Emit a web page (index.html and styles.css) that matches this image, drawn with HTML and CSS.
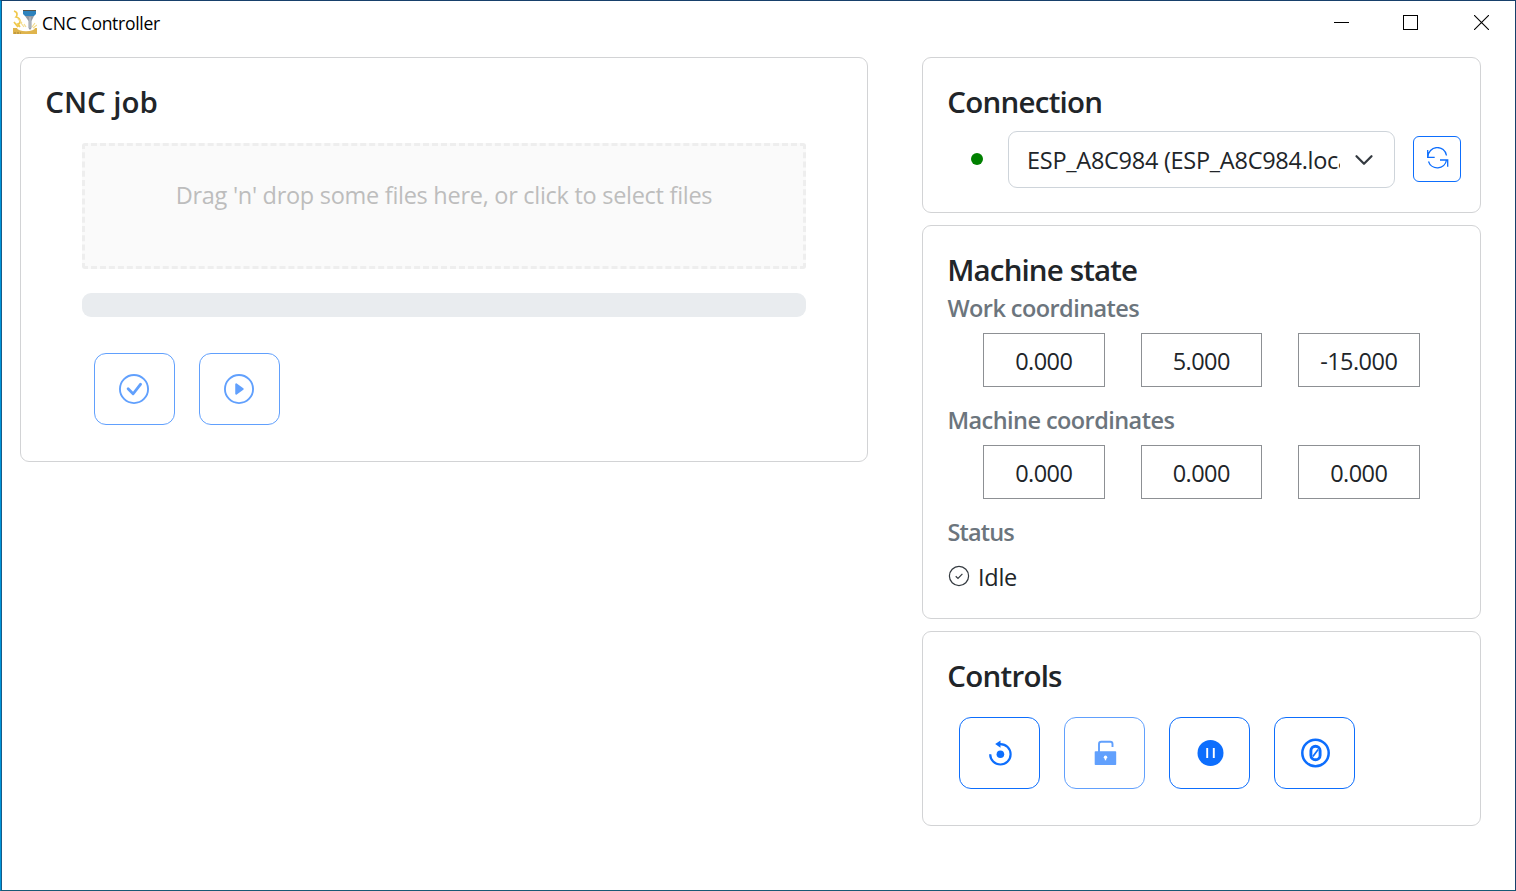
FILE: index.html
```html
<!DOCTYPE html>
<html lang="en">
<head>
<meta charset="utf-8">
<title>CNC Controller</title>
<link rel="stylesheet" href="styles.css">
</head>
<body>
<div class="window">
  <header class="titlebar">
    <svg class="app-icon" width="24" height="25" viewBox="0 0 24 25">
      <rect y="18" width="24" height="6" fill="#dfb44c"/>
      <ellipse cx="13" cy="18" rx="9" ry="3.3" fill="#fff"/>
      <path d="M1 1q3 1 3 3t-1 3q4 1 4 4t-2 3l2 3M1 12l4 5" fill="none" stroke="#f0c84c" stroke-width="1.700"/>
      <path d="M5 9l4 4M11 14l2 3M22 13l-3 4M8 13l3 4M24 15l-4 3" fill="none" stroke="#f3dc8e" stroke-width="1.200"/>
      <path d="M10 0h13v4l-2 2h-9l-2-2z" fill="#2d82bd"/>
      <path d="M10 0h13v1H10z" fill="#57534a"/>
      <path d="M12 6h9l-2.500 5v7l-1.500 2-1.500-2v-7z" fill="#939aa4"/>
      <path d="M17 7v11" stroke="#c3c8ce" stroke-width="1"/>
      <path d="M1 23h7" stroke="#a58237" stroke-width="1" stroke-dasharray="2 1"/>
    </svg>
    <span class="app-title">CNC Controller</span>
    <div class="window-buttons">
      <svg width="15" height="15" viewBox="0 0 15 15"><path d="M0 7.500h15" stroke="#000"/></svg>
      <svg width="15" height="15" viewBox="0 0 15 15"><rect x=".5" y=".5" width="14" height="14" fill="none" stroke="#000"/></svg>
      <svg width="15" height="15" viewBox="0 0 15 15"><path d="M0 0l15 15M15 0L0 15" stroke="#000" stroke-width="1.100"/></svg>
    </div>
  </header>
  <main class="content">
    <section class="card job">
      <h2 class="job-title">CNC job</h2>
      <div class="dropzone"><span>Drag 'n' drop some files here, or click to select files</span></div>
      <div class="progress"></div>
      <div class="actions">
        <button class="btn" disabled>
          <svg width="30" height="30" viewBox="0 0 16 16" fill="currentColor"><path d="M8 15A7 7 0 1 1 8 1a7 7 0 0 1 0 14m0 1A8 8 0 1 0 8 0a8 8 0 0 0 0 16"/><path d="M10.970 4.970a.235.235 0 0 0-.020.022L7.477 9.417 5.384 7.323a.75.75 0 0 0-1.060 1.060L6.970 11.030a.75.75 0 0 0 1.079-.020l3.992-4.990a.75.75 0 0 0-1.071-1.050"/></svg>
        </button>
        <button class="btn" disabled>
          <svg width="30" height="30" viewBox="0 0 16 16" fill="currentColor"><path d="M8 15A7 7 0 1 1 8 1a7 7 0 0 1 0 14m0 1A8 8 0 1 0 8 0a8 8 0 0 0 0 16"/><path d="M6.271 5.055a.5.5 0 0 1 .520.038l3.500 2.500a.5.5 0 0 1 0 .814l-3.500 2.500A.5.5 0 0 1 6 10.500v-5a.5.5 0 0 1 .271-.445"/></svg>
        </button>
      </div>
    </section>
    <div class="side">
      <section class="card connection">
        <h2 class="connection-title">Connection</h2>
        <div class="connection-row">
          <span class="status-dot"></span>
          <div class="select">
            <span class="select-text">ESP_A8C984 (ESP_A8C984.local)</span>
            <svg width="24" height="24" viewBox="0 0 16 16"><path d="m3 5.500 5 5 5-5" fill="none" stroke="#343a40" stroke-width="1.500" stroke-linecap="round" stroke-linejoin="round"/></svg>
          </div>
          <button class="btn refresh">
            <svg width="24" height="24" viewBox="0 0 24 24" fill="none" stroke="currentColor" stroke-width="1.300"><path d="M2.700 3v7.300h7M3 9.800a9.300 9.300 0 0 1 18.500-1.300M22.700 19.700V13h-7.700M21.500 13.200A9.300 9.300 0 0 1 3.500 14.500"/></svg>
          </button>
        </div>
      </section>
      <section class="card machine">
        <h2 class="machine-title">Machine state</h2>
        <h3 class="work-label">Work coordinates</h3>
        <div class="coords"><span>0.000</span><span>5.000</span><span>-15.000</span></div>
        <h3 class="machine-label">Machine coordinates</h3>
        <div class="coords"><span>0.000</span><span>0.000</span><span>0.000</span></div>
        <h3 class="status-label">Status</h3>
        <div class="status-line">
          <svg width="22" height="22" viewBox="0 0 22 22" fill="none" stroke="#343a40" stroke-width="1.200"><circle cx="11" cy="11" r="9.600"/><path d="M7.700 11.200l2.300 2.200 4.400-4.600"/></svg>
          <span>Idle</span>
        </div>
      </section>
      <section class="card controls">
        <h2 class="controls-title">Controls</h2>
        <div class="actions">
          <button class="btn">
            <svg width="30" height="30" viewBox="0 0 30 30"><path d="M5.200 16.300A10.200 10.200 0 1 0 15.400 6.100H14" fill="none" stroke="currentColor" stroke-width="2.200"/><path d="M10.200 6.100L15.500 2.400v7.400z" fill="currentColor"/><circle cx="15.400" cy="16.300" r="3.800" fill="currentColor"/></svg>
          </button>
          <button class="btn" disabled>
            <svg width="30" height="30" viewBox="0 0 30 30"><path d="M9 14V6a2.300 2.300 0 0 1 2.300-2.300h8.900A2.300 2.300 0 0 1 22.500 6v3" fill="none" stroke="currentColor" stroke-width="1.900"/><rect x="4.700" y="13.200" width="21.500" height="13.800" rx=".8" fill="currentColor"/><circle cx="15.500" cy="19.200" r="1.700" fill="#fff"/><path d="M15.500 19v3.300" stroke="#fff" stroke-width="1.400"/></svg>
          </button>
          <button class="btn">
            <svg width="30" height="30" viewBox="0 0 30 30"><circle cx="15.500" cy="15" r="13" fill="currentColor"/><path d="M12.200 10v10M18.800 10v10" stroke="#fff" stroke-width="1.900"/></svg>
          </button>
          <button class="btn">
            <svg width="30" height="30" viewBox="0 0 30 30" fill="none" stroke="currentColor"><circle cx="15.500" cy="15" r="13.200" stroke-width="2.500"/><rect x="10.900" y="8.200" width="9.200" height="13.600" rx="4.600" stroke-width="2.900"/><path d="M12.900 18.500l5.200-7" stroke-width="1.700"/></svg>
          </button>
        </div>
      </section>
    </div>
  </main>
</div>
</body>
</html>
```
FILE: styles.css
```css
* { box-sizing: border-box; }

body {
  margin: 0;
  font-family: "Open Sans", "Noto Sans", sans-serif;
  font-size: 23.5px;
  color: #212529;
  background: #fff;
}

.window {
  height: 891px;
  border: 1px solid #17406b;
  border-left-color: #0096db;
  border-bottom-color: #175a75;
  box-shadow: inset 1px 0 #175a86;
  overflow: hidden;
}

.titlebar {
  display: flex;
  align-items: center;
  height: 43px;
  padding: 0 26px 0 12px;
}

.app-icon { margin-right: 5px; }

.app-title {
  color: #000;
  font-size: 17.5px;
  line-height: 24px;
  letter-spacing: -0.28px;
}

.window-buttons {
  display: flex;
  gap: 55px;
  margin-left: auto;
}

.window-buttons svg { display: block; }
.window-buttons svg:nth-child(1) { margin-right: -1px; }
.window-buttons svg:nth-child(3) { margin-left: 1px; }

.content {
  display: flex;
  align-items: flex-start;
  gap: 54px;
  padding: 13px 34px 0 19px;
}

.card {
  border: 1px solid #d2d3d5;
  border-radius: 9px;
  padding: 25px 19px 0 24px;
}

.job { width: 848px; height: 405px; }
.side { display: flex; flex-direction: column; gap: 12px; width: 559px; }
.connection { height: 156px; }
.machine { height: 394px; }
.controls { height: 195px; }

h2, h3 { margin: 0; font-weight: 600; white-space: nowrap; }
h2 { font-size: 29.5px; line-height: 37px; letter-spacing: -0.75px; text-indent: 0.3px; }
h3 { font-size: 23.5px; line-height: 29px; color: #6c757d; letter-spacing: -0.56px; text-indent: 0.4px; }

.job-title { letter-spacing: -0.05px; }
.machine-title { letter-spacing: -0.87px; }
.status-label { letter-spacing: -0.85px; }
.work-label { margin-top: 6px; }

.dropzone {
  display: flex;
  justify-content: center;
  margin: 23px 42px 0 37px;
  height: 126px;
  padding-top: 31px;
  border: 3px dashed #eee;
  border-radius: 3px;
  background: #fafafa;
  color: #bdbdbd;
  line-height: 36px;
  letter-spacing: -0.28px;
  white-space: nowrap;
}

.progress {
  margin: 24px 42px 0 37px;
  height: 24px;
  border-radius: 9px;
  background: #e9ecef;
}

.actions { display: flex; gap: 24px; }
.job .actions { margin: 36px 0 0 49px; }
.controls .actions { margin: 23px 0 0 12px; }

.btn {
  display: flex;
  align-items: center;
  justify-content: center;
  width: 81px;
  height: 72px;
  padding: 0 1px 0 0;
  border: 1px solid #0d6efd;
  border-radius: 12px;
  background: #fff;
  color: #0d6efd;
}

.controls .btn { padding: 0; }
.btn:disabled { opacity: 0.65; }
.btn svg { display: block; }

.connection-row {
  display: flex;
  align-items: center;
  height: 57px;
  margin: 11px 0 0 24px;
}

.status-dot {
  width: 12px;
  height: 12px;
  margin-bottom: 1px;
  border-radius: 50%;
  background: #008000;
}

.select {
  display: flex;
  align-items: center;
  justify-content: space-between;
  width: 387px;
  height: 57px;
  margin: 0 18px 0 25px;
  padding: 0 18px;
  border: 1px solid #ced4da;
  border-radius: 9px;
}

.select-text {
  width: 313px;
  overflow: hidden;
  white-space: nowrap;
  letter-spacing: -0.27px;
  line-height: 36px;
}

.refresh {
  width: 48px;
  height: 46px;
  margin-bottom: 2px;
  padding: 0;
  border-radius: 6px;
}

.coords {
  display: flex;
  gap: 36px;
  height: 54px;
  margin: 10px 0 19px 36px;
}

.coords span {
  width: 121.5px;
  border: 1px solid #8d9094;
  text-align: center;
  line-height: 55px;
  letter-spacing: -0.55px;
}

.status-line {
  display: flex;
  align-items: center;
  gap: 8px;
  margin: 12px 0 0 1px;
  line-height: 36px;
  letter-spacing: -0.25px;
}

.status-line svg { margin-bottom: 3px; }
```
